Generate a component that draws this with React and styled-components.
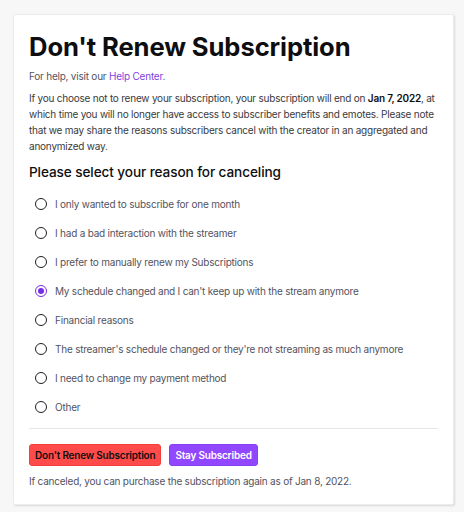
import React from 'react'
import styled, { createGlobalStyle } from 'styled-components'

const GlobalStyle = createGlobalStyle`
  body {
    margin: 0;
    background: #f7f7f8;
    font-family: Inter, "Noto Sans", sans-serif;
  }
`

const reasons = [
  'I only wanted to subscribe for one month',
  'I had a bad interaction with the streamer',
  'I prefer to manually renew my Subscriptions',
  "My schedule changed and I can't keep up with the stream anymore",
  'Financial reasons',
  "The streamer's schedule changed or they're not streaming as much anymore",
  'I need to change my payment method',
  'Other',
]

const App = () => {
  const selected = 3
  return (
    <Page>
      <GlobalStyle />
      <Card>
        <Title>Don't Renew Subscription</Title>
        <Help>For help, visit our <HelpLink href="#">Help Center</HelpLink>.</Help>
        <Body>
          If you choose not to renew your subscription, your subscription will end on <b>Jan 7, 2022</b>, at
          which time you will no longer have access to subscriber benefits and emotes. Please note
          that we may share the reasons subscribers cancel with the creator in an aggregated and
          anonymized way.
        </Body>
        <Heading>Please select your reason for canceling</Heading>
        <List>
          {reasons.map((r, i) => (
            <Option key={r}>
              <Radio checked={i === selected} />
              <span>{r}</span>
            </Option>
          ))}
        </List>
        <Divider />
        <Buttons>
          <Button variant="danger">Don't Renew Subscription</Button>
          <Button variant="primary">Stay Subscribed</Button>
        </Buttons>
        <Note>If canceled, you can purchase the subscription again as of Jan 8, 2022.</Note>
      </Card>
    </Page>
  )
}

export default App

const Page = styled.div`
  padding: 14px 10px 8px 13px;
`
const Card = styled.div`
  width: 409px;
  background: #fff;
  border: 1px solid #ececec;
  box-shadow: 1px 1px 2px rgba(0, 0, 0, 0.12);
  border-radius: 2px;
  padding: 17px 15px 15px 15px;
  font-size: 10px;
  letter-spacing: -0.22px;
`
const Title = styled.h1`
  margin: 0;
  font-family: Inter, sans-serif;
  font-weight: 700;
  font-size: 25.6px;
  line-height: 30px;
  letter-spacing: -0.1px;
  color: #0e0e10;
`
const Help = styled.p`
  margin: 6px 0 0;
  line-height: 16px;
  color: #53535f;
`
const HelpLink = styled.a`
  color: #7d3fe0;
  text-decoration: none;
`
const Body = styled.p`
  margin: 6px 0 0;
  line-height: 16px;
  color: #3a3a3d;
  b {
    font-weight: 600;
    color: #0e0e10;
  }
`
const Heading = styled.h2`
  margin: 8px 0 0;
  font-size: 13.6px;
  line-height: 20px;
  font-weight: 500;
  letter-spacing: -0.1px;
  color: #0e0e10;
`
const List = styled.div`
  margin-top: 7px;
  display: flex;
  flex-direction: column;
`
const Option = styled.label`
  display: flex;
  align-items: center;
  gap: 8px;
  height: 29px;
  padding-left: 6px;
  color: #53535f;
`
const Radio = styled.span`
  width: 12px;
  height: 12px;
  box-sizing: border-box;
  border-radius: 50%;
  border: 1.5px solid ${p => (p.checked ? '#772ce8' : '#1f1f23')};
  display: flex;
  align-items: center;
  justify-content: center;
  &::after {
    content: '';
    width: 6px;
    height: 6px;
    border-radius: 50%;
    background: ${p => (p.checked ? '#772ce8' : 'transparent')};
  }
`
const Divider = styled.hr`
  margin: 7px 0 0;
  border: none;
  border-top: 1px solid #e6e6ea;
`
const Buttons = styled.div`
  display: flex;
  gap: 8px;
  margin-top: 15px;
`
const Button = styled.button`
  height: 22px;
  padding: 0 5px;
  border-radius: 3px;
  border: 1px solid ${p => (p.variant === 'danger' ? '#f0403e' : '#8a3ff5')};
  background: ${p => (p.variant === 'danger' ? '#ff4c4a' : '#9147ff')};
  color: ${p => (p.variant === 'danger' ? '#0e0e10' : '#fff')};
  font-family: Inter, sans-serif;
  font-size: 10px;
  font-weight: 600;
  letter-spacing: -0.2px;
`
const Note = styled.p`
  margin: 7px 0 0;
  line-height: 16px;
  color: #53535f;
`
